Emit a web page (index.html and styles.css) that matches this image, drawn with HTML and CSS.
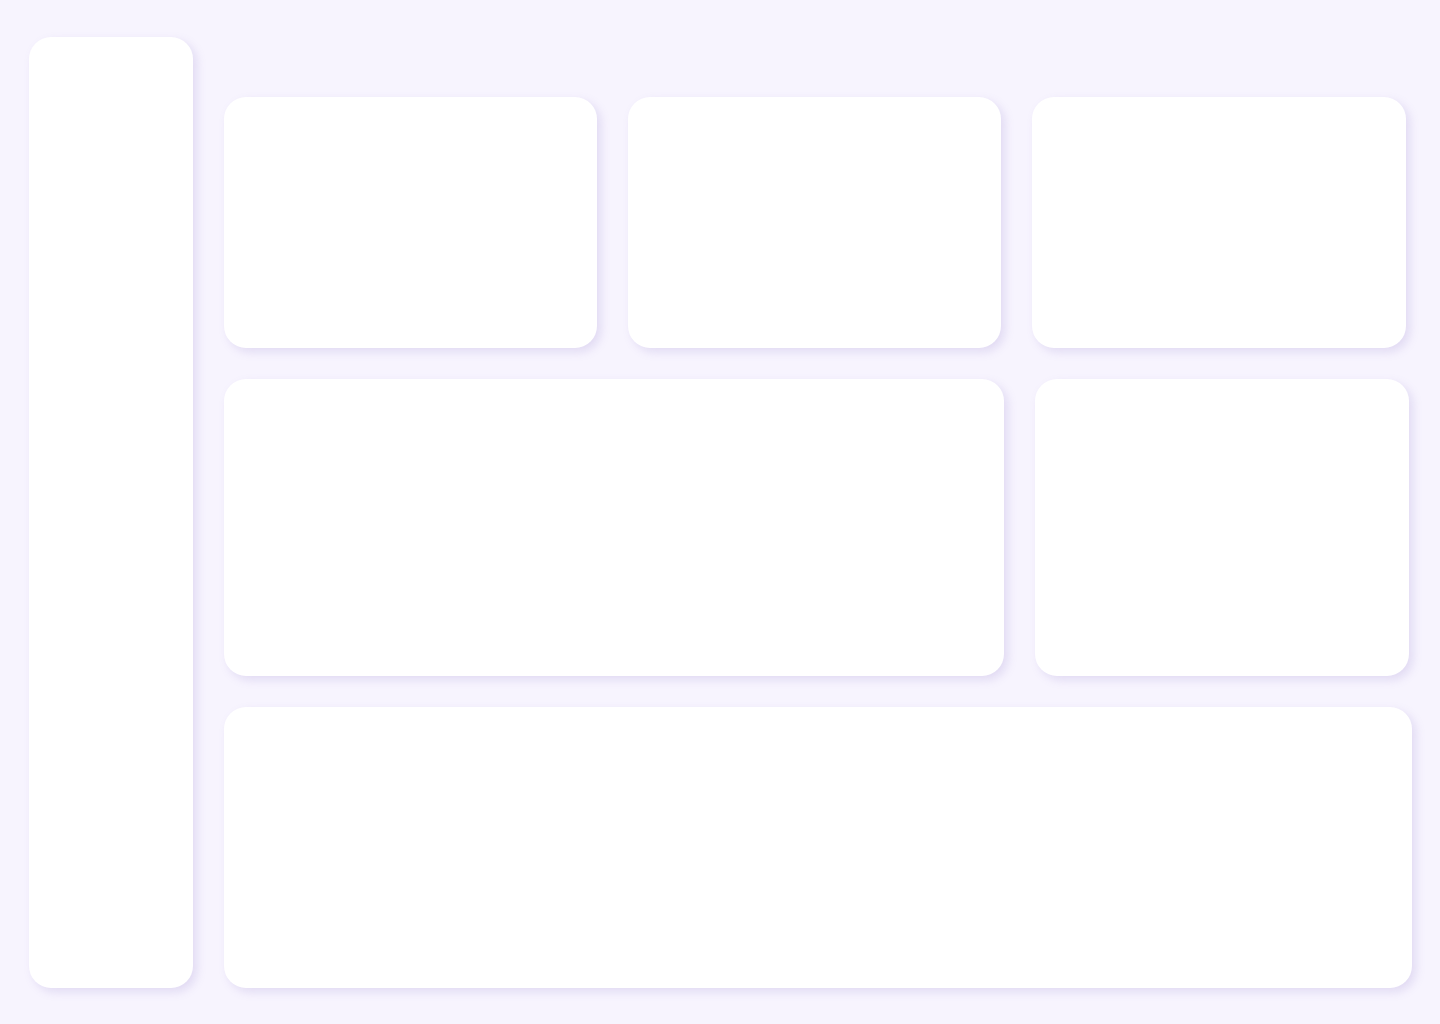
FILE: index.html
```html
<!DOCTYPE html>
<html lang="en">
<head>
<meta charset="utf-8">
<title>Dashboard</title>
<link rel="stylesheet" href="styles.css">
</head>
<body>
<div class="app">
  <aside class="sidebar card"></aside>
  <main class="main">
    <header class="header"></header>
    <section class="row row-1">
      <div class="card"></div>
      <div class="card"></div>
      <div class="card"></div>
    </section>
    <section class="row row-2">
      <div class="card"></div>
      <div class="card"></div>
    </section>
    <section class="row row-3">
      <div class="card"></div>
    </section>
  </main>
</div>
</body>
</html>
```
FILE: styles.css
```css
html, body {
  margin: 0;
  padding: 0;
  background: #f7f4fe;
  font-family: "Inter", "Liberation Sans", sans-serif;
}
.app {
  display: flex;
  gap: 31px;
  padding: 37px 0 36px 29px;
  height: 1024px;
  box-sizing: border-box;
}
.card {
  background: #ffffff;
  border-radius: 22px;
  box-shadow: 4px 4px 10px rgba(140, 120, 200, 0.2);
}
.sidebar {
  width: 164px;
  flex: none;
}
.main {
  display: flex;
  flex-direction: column;
  gap: 31px;
}
.header {
  height: 29px;
}
.row {
  display: grid;
  gap: 31px;
}
.row-1 {
  width: 1182px;
  height: 251px;
  grid-template-columns: 373px 373px 374px;
}
.row-2 {
  width: 1185px;
  height: 297px;
  grid-template-columns: 780px 374px;
}
.row-3 {
  width: 1188px;
  height: 281px;
  grid-template-columns: 1fr;
}
```
